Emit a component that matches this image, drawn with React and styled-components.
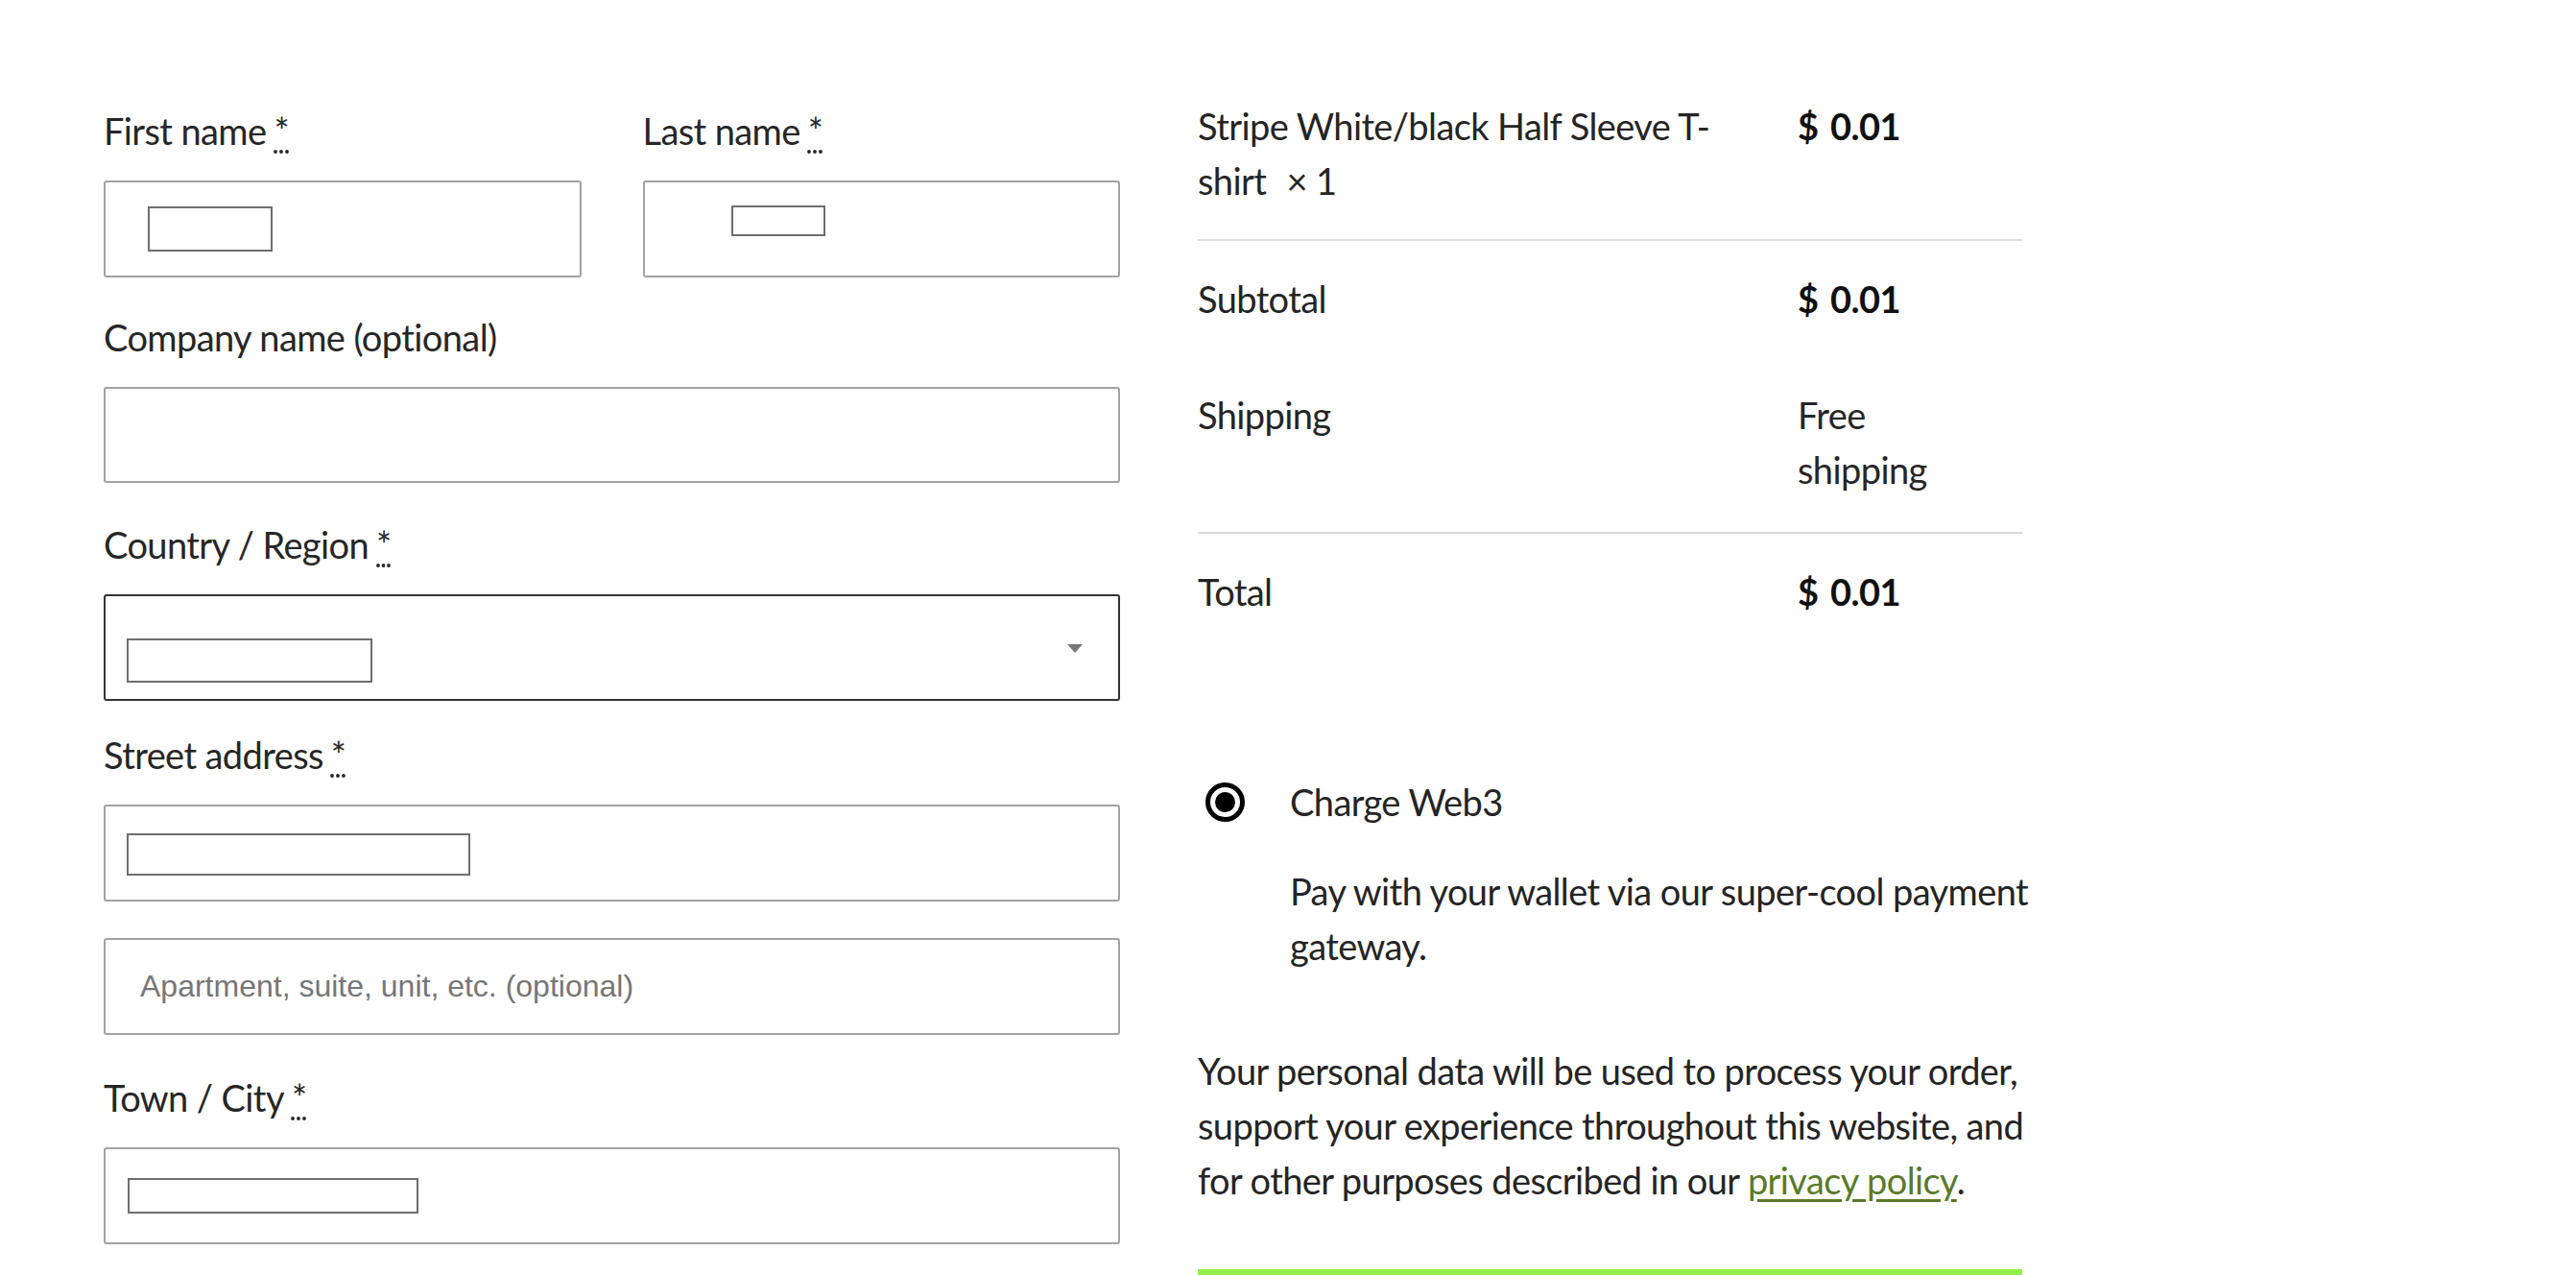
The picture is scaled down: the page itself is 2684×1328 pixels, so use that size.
import React from 'react'
import styled, { createGlobalStyle } from 'styled-components'

const GlobalStyle = createGlobalStyle`
  html, body {
    margin: 0;
    padding: 0;
    background: #fff;
  }
  body {
    font-family: Lato, "Open Sans", sans-serif;
    color: #242424;
    overflow: hidden;
  }
`;

const Page = styled.div`
  display: grid;
  grid-template-columns: 1059px 859px;
  column-gap: 81px;
  padding-left: 108px;
  height: 1328px;
  overflow: hidden;
  letter-spacing: -0.6px;
`;

const Column = styled.div`
  display: flex;
  flex-direction: column;
  padding-top: ${(props) => props.$pt || '0'};
`;

const NameGrid = styled.div`
  display: grid;
  grid-template-columns: 1fr 1fr;
  column-gap: 64px;
`;

const FormRow = styled.div`
  display: flex;
  flex-direction: column;
  margin-bottom: ${(props) => props.$mb || '34px'};
`;

const Label = styled.label`
  font-size: 38px;
  line-height: 57px;
  margin-bottom: 23px;
  color: #262626;
`;

const Required = styled.abbr`
  margin-left: 8px;
  text-decoration: underline dotted;
  text-underline-offset: 6px;
`;

const Field = styled.div`
  box-sizing: border-box;
  height: ${(props) => props.$height || '101px'};
  border: 2px solid ${(props) => (props.$dark ? '#333' : '#a2a2a2')};
  border-radius: 3px;
  padding: ${(props) => props.$padding || '0'};
  display: flex;
  align-items: flex-start;
  justify-content: space-between;
  background: #fff;
`;

const Redact = styled.div`
  box-sizing: border-box;
  width: ${(props) => props.$w};
  height: ${(props) => props.$h};
  border: 2px solid #6e6e6e;
  background: #fff;
`;

const Caret = styled.div`
  width: 0;
  height: 0;
  margin-top: 6px;
  border-left: 8px solid transparent;
  border-right: 8px solid transparent;
  border-top: 9px solid #777;
`;

const TextInput = styled.input`
  box-sizing: border-box;
  width: 100%;
  height: 101px;
  border: 2px solid #a2a2a2;
  border-radius: 3px;
  padding: 0 36px;
  font-family: "Liberation Sans", Arial, sans-serif;
  font-size: 32px;
  letter-spacing: 0;
  color: #333;
  background: #fff;
  outline: none;
  &::placeholder {
    color: #767676;
  }
`;

const OrderRow = styled.div`
  display: grid;
  grid-template-columns: 625px 1fr;
  padding: 32px 0 ${(props) => props.$pb || '32px'};
  border-bottom: ${(props) => (props.$divider ? '2px solid #dcdcdc' : 'none')};
  font-size: 38px;
  line-height: 57px;
`;

const Amount = styled.div`
  font-weight: ${(props) => (props.$bold ? 700 : 400)};
  color: ${(props) => (props.$bold ? '#111' : '#262626')};
  word-spacing: ${(props) => (props.$bold ? '4px' : '0')};
`;

const Qty = styled.span`
  margin-left: 12px;
`;

const Payment = styled.div`
  margin-top: 130px;
  padding-left: 8px;
`;

const MethodRow = styled.div`
  display: flex;
  align-items: center;
  gap: 47px;
  font-size: 38px;
  line-height: 57px;
`;

const Radio = styled.span`
  box-sizing: border-box;
  width: 41px;
  height: 41px;
  border-radius: 50%;
  border: 5px solid #000;
  display: flex;
  align-items: center;
  justify-content: center;
  &::after {
    content: '';
    width: 21px;
    height: 21px;
    border-radius: 50%;
    background: #000;
  }
`;

const MethodDesc = styled.p`
  margin: 36px 0 0 88px;
  font-size: 38px;
  line-height: 57px;
  white-space: nowrap;
`;

const Privacy = styled.p`
  margin: 73px 0 0;
  font-size: 38px;
  line-height: 57px;
  white-space: nowrap;
`;

const PolicyLink = styled.a`
  color: #5a7a2a;
  text-decoration: underline;
  text-underline-offset: 5px;
`;

const PlaceButton = styled.button`
  flex-shrink: 0;
  margin-top: 64px;
  width: 100%;
  height: 110px;
  border: none;
  padding: 0;
  background: #93ef48;
`;

const rows = [
  { label: 'Subtotal', value: '$ 0.01', bold: true },
  { label: 'Shipping', value: ['Free', 'shipping'], divider: true, pb: '36px' },
  { label: 'Total', value: '$ 0.01', bold: true },
];

const App = () => {
  return (
    <>
      <GlobalStyle />
      <Page>
        <Column $pt="108px">
          <NameGrid>
            <FormRow>
              <Label>First name<Required title="required">*</Required></Label>
              <Field $padding="25px 0 0 44px">
                <Redact $w="130px" $h="47px" />
              </Field>
            </FormRow>
            <FormRow>
              <Label>Last name<Required title="required">*</Required></Label>
              <Field $padding="24px 0 0 90px">
                <Redact $w="98px" $h="32px" />
              </Field>
            </FormRow>
          </NameGrid>

          <FormRow $mb="36px">
            <Label>Company name (optional)</Label>
            <Field $height="100px" />
          </FormRow>

          <FormRow $mb="28px">
            <Label>Country / Region<Required title="required">*</Required></Label>
            <Field $dark $height="111px" $padding="44px 37px 0 22px">
              <Redact $w="256px" $h="46px" />
              <Caret />
            </Field>
          </FormRow>

          <FormRow $mb="38px">
            <Label>Street address<Required title="required">*</Required></Label>
            <Field $padding="28px 0 0 22px">
              <Redact $w="358px" $h="44px" />
            </Field>
          </FormRow>

          <FormRow $mb="37px">
            <TextInput placeholder="Apartment, suite, unit, etc. (optional)" />
          </FormRow>

          <FormRow>
            <Label>Town / City<Required title="required">*</Required></Label>
            <Field $padding="30px 0 0 23px">
              <Redact $w="303px" $h="37px" />
            </Field>
          </FormRow>
        </Column>

        <Column $pt="71px">
          <OrderRow $divider>
            <div>
              Stripe White/black Half Sleeve T-<br />
              shirt <Qty>× 1</Qty>
            </div>
            <Amount $bold>$ 0.01</Amount>
          </OrderRow>
          {rows.map((row, index) => (
            <OrderRow key={index} $divider={row.divider} $pb={row.pb}>
              <div>{row.label}</div>
              <Amount $bold={row.bold}>
                {Array.isArray(row.value)
                  ? row.value.map((part, i) => <div key={i}>{part}</div>)
                  : row.value}
              </Amount>
            </OrderRow>
          ))}

          <Payment>
            <MethodRow>
              <Radio />
              <span>Charge Web3</span>
            </MethodRow>
            <MethodDesc>
              Pay with your wallet via our super-cool payment<br />
              gateway.
            </MethodDesc>
          </Payment>

          <Privacy>
            Your personal data will be used to process your order,<br />
            support your experience throughout this website, and<br />
            for other purposes described in our <PolicyLink href="#">privacy policy</PolicyLink>.
          </Privacy>

          <PlaceButton />
        </Column>
      </Page>
    </>
  )
}

export default App
